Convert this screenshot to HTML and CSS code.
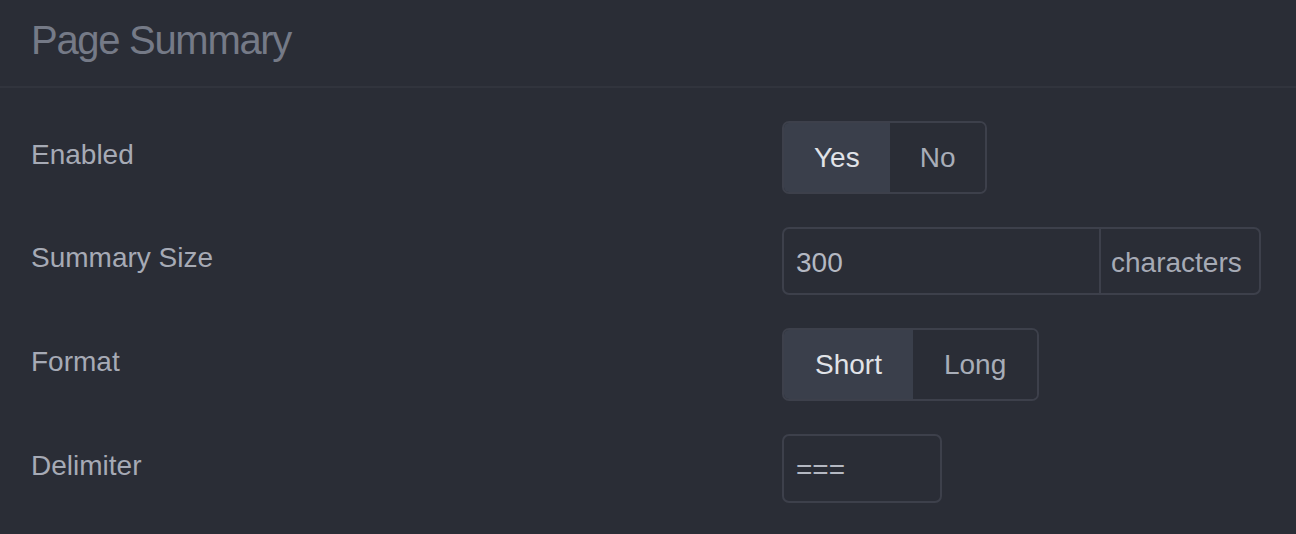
FILE: index.html
```html
<!DOCTYPE html>
<html lang="en">
<head>
<meta charset="utf-8">
<title>Page Summary</title>
<link rel="stylesheet" href="styles.css">
</head>
<body>
<div class="panel">
  <div class="panel-header">
    <h1 class="panel-title">Page Summary</h1>
  </div>
  <form class="form">
    <div class="row">
      <label class="label">Enabled</label>
      <div class="control">
        <div class="toggle toggle-yesno">
          <span class="toggle-btn active">Yes</span>
          <span class="toggle-btn">No</span>
        </div>
      </div>
    </div>
    <div class="row">
      <label class="label">Summary Size</label>
      <div class="control">
        <div class="input-group">
          <span class="input input-size">300</span>
          <span class="addon">characters</span>
        </div>
      </div>
    </div>
    <div class="row">
      <label class="label">Format</label>
      <div class="control">
        <div class="toggle">
          <span class="toggle-btn active">Short</span>
          <span class="toggle-btn">Long</span>
        </div>
      </div>
    </div>
    <div class="row">
      <label class="label">Delimiter</label>
      <div class="control">
        <span class="input input-delim">===</span>
      </div>
    </div>
  </form>
</div>
</body>
</html>
```

FILE: styles.css
```css
* { box-sizing: border-box; }
html, body {
  margin: 0;
  padding: 0;
  background: #2a2d36;
  font-family: "Liberation Sans", Arial, sans-serif;
  color: #a6aab5;
}
.panel { width: 1296px; }
.panel-header {
  height: 88px;
  border-bottom: 2px solid #31343d;
  padding: 14px 0 0 31px;
}
.panel-title {
  margin: 0;
  font-weight: 400;
  font-size: 40px;
  line-height: 52px;
  letter-spacing: -1.3px;
  color: #757a87;
}
.form {
  padding: 33px 0 0 31px;
  display: flex;
  flex-direction: column;
  gap: 33px;
}
.row {
  display: flex;
  align-items: center;
}
.label {
  width: 751px;
  font-size: 28px;
  line-height: 36px;
  padding-bottom: 6px;
  color: #a6aab5;
}
.control { display: flex; }
.toggle {
  display: flex;
  height: 73px;
  border: 2px solid #3d404b;
  border-radius: 7px;
  overflow: hidden;
}
.toggle-btn {
  display: flex;
  align-items: center;
  padding: 0 31px;
  font-size: 28px;
  color: #a8adb8;
  background: #2a2d36;
}
.toggle-yesno .toggle-btn { padding: 0 30px; }
.toggle-btn.active {
  background: #3a3f4b;
  color: #e1e3e8;
}
.input-group {
  display: flex;
  height: 68px;
  border: 2px solid #3d404b;
  border-radius: 7px;
}
.input {
  display: flex;
  align-items: center;
  font-size: 28px;
  color: #b4b8c2;
  padding: 3px 0 0 12px;
}
.input-size {
  width: 317px;
  border-right: 2px solid #3d404b;
}
.addon {
  display: flex;
  align-items: center;
  padding: 3px 10px 0 10px;
  width: 158px;
  font-size: 28px;
  color: #a6aab5;
}
.input-delim {
  width: 160px;
  height: 69px;
  border: 2px solid #3d404b;
  border-radius: 7px;
}
```
